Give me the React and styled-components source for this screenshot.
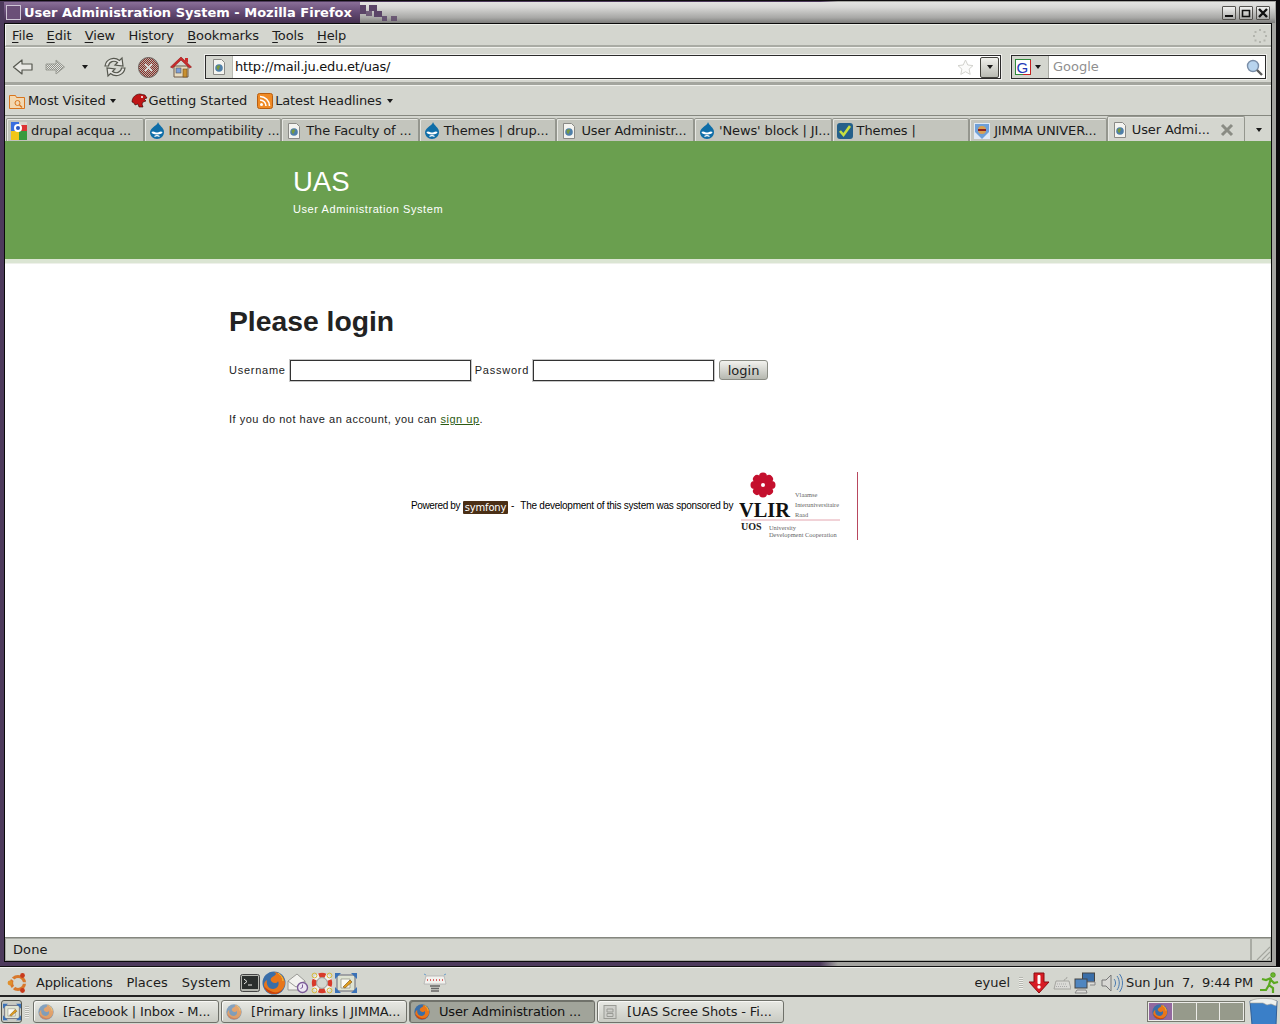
import React from "react";
import styled, { createGlobalStyle } from "styled-components";

const Global = createGlobalStyle`
  html, body { margin: 0; padding: 0; background: #000; }
  body { width: 1280px; height: 1024px; overflow: hidden; font-family: "DejaVu Sans", sans-serif; }
  * { box-sizing: border-box; }
  svg { flex: none; display: block; }
`;

const Desktop = styled.div`
  width: 1280px; height: 1024px; display: flex; flex-direction: column; background: #d4d6cf; color: #1c1c1c;
  font: 13px/16px "DejaVu Sans", sans-serif;
`;
const Win = styled.div`
  height: 967px; display: flex; flex-direction: column; padding: 1px 4px 4px 4px;
  background: linear-gradient(90deg, #4d3a5c 820px, #a4a4a0 838px);
  border-top: 1px solid #0d0b0d; border-right: 4px solid #0c0a0c; margin: 0; flex: none;
  border-bottom: 1px solid #111;
`;
const Title = styled.div`
  height: 21px; margin-right: -3px; flex: none; display: flex; align-items: center; padding: 0 5px 0 2px;
  background: linear-gradient(#e4e4e2, #d8d8d6 25%, #a8a8a6 75%, #7c7c7a);
`;
const TitlePurple = styled.div`
  height: 21px; width: 356px; flex: none; display: flex; align-items: center; gap: 3px; margin-left: -2px; padding-left: 2px;
  background: linear-gradient(#8a6f98, #644a74 50%, #45304f);
  color: #fff; font-weight: 700; font-size: 13px; white-space: nowrap;
`;
const Spacer = styled.div`flex: 1;`;
const WinBtn = styled.div`
  width: 14px; height: 14px; margin-left: 3px; border: 1px solid #55534f; background: linear-gradient(#f2f2f0, #aaaaa8);
  display: flex; align-items: center; justify-content: center; border-radius: 1px;
`;
const Client = styled.div`
  flex: 1; min-height: 0; display: flex; flex-direction: column; border: 1px solid #0a0a0a; background: #d4d6cf;
`;
const MenuBar = styled.div`
  height: 23px; flex: none; display: flex; align-items: center; padding: 2px 3px 0 6px; gap: 13.25px;
  background: #d4d6cf; border-bottom: 2px solid #a9aba4; border-left: 1px solid #f4f4f2;
  box-shadow: inset 0 1px #eef0ea;
`;
const MenuItem = styled.span`
  letter-spacing: -.1px; u { text-decoration: underline; text-underline-offset: 2px; text-decoration-thickness: 1px; }
`;
const NavBar = styled.div`
  height: 38px; flex: none; display: flex; align-items: center; padding: 5px 5px 0 1px;
  background: #d4d6cf; border-bottom: 3px solid #a3a59e; box-shadow: inset 0 1px #f0f1ec;
`;
const NavBtn = styled.span`
  display: flex; align-items: center; justify-content: center; flex: none; width: ${p => p.$w || 33}px; height: 24px;
`;
const UrlBox = styled.div`
  width: 796px; height: 24px; margin-left: 8px; flex: none; display: flex; align-items: center; background: #fff;
  border: 1px solid #2b2b2b; outline: 1px solid #efefec;
`;
const Favicon = styled.span`
  width: 27px; height: 22px; background: #d4d6cf; flex: none; display: flex; align-items: center; justify-content: center; border-right: 1px solid #b9bbb4;
`;
const UrlText = styled.span`flex: 1; padding-left: 2px; font-size: 13px; letter-spacing: -.23px; color: #111;`;
const StarSlot = styled.span`margin-right: 6px; flex: none;`;
const DropBtn = styled.span`
  width: 19px; height: 21px; margin-right: 1px; border: 1px solid #44443f; border-radius: 2px; background: linear-gradient(#f0f0ec, #b9bbb3);
  display: flex; align-items: center; justify-content: center; flex: none;
`;
const Search = styled.div`
  width: 255px; height: 24px; margin-left: 10px; flex: none; display: flex; align-items: center; background: #fff; border: 1px solid #2b2b2b; outline: 1px solid #efefec;
`;
const Engine = styled.span`
  width: 37px; height: 22px; flex: none; display: flex; align-items: center; gap: 4px; padding-left: 3px; background: #d4d6cf; border-right: 1px solid #a9aba4;
`;
const SearchText = styled.span`flex: 1; padding-left: 4px; color: #8f8f8f;`;
const MagnifierSlot = styled.span`margin-right: 2px; flex: none;`;
const BookBar = styled.div`
  height: 31px; flex: none; display: flex; align-items: center; padding: 2px 0 0 4px; background: #d4d6cf; border-bottom: 1px solid #85877f; box-shadow: inset 0 1px #f0f1ec;
`;
const Book = styled.span`display: flex; align-items: center; gap: ${p => p.$gap ?? 2}px; margin-right: ${p => p.$mr || 0}px; white-space: nowrap; letter-spacing: -.13px;`;
const Caret = styled.span`
  width: 0; height: 0; border-left: 3px solid transparent; border-right: 3px solid transparent; border-top: 4px solid #1a1a1a; display: inline-block; flex: none; margin-left: ${p => p.$ml || 0}px;
`;
const TabBar = styled.div`
  height: 25px; flex: none; display: flex; align-items: flex-end; padding-left: 1px; background: #d4d6cf;
`;
const Tab = styled.div`
  width: ${p => p.$active ? 138 : 137.6}px; height: ${p => p.$active ? 25 : 23}px; flex: none; display: flex; align-items: center; gap: 4px;
  padding: ${p => p.$active ? "1px 10px 0 4px" : "1px 1px 0 4px"}; white-space: nowrap; overflow: hidden; letter-spacing: -.12px;
  background: ${p => p.$active ? "#d4d6cf" : "#c3c5bd"}; border: 1px solid #94968e; border-bottom: 0; border-radius: 2px 2px 0 0;
  box-shadow: inset 1px 1px #e6e7e2;
`;
const TabLabel = styled.span`flex: 1;`;
const TabMore = styled.div`flex: 1; height: 23px; display: flex; align-items: center; justify-content: center; padding-left: 2px;`;
const Viewport = styled.div`flex: 1; min-height: 0; display: flex; flex-direction: column; background: #fff; color: #000; font-family: "Liberation Sans", sans-serif;`;
const Hero = styled.div`
  height: 118px; flex: none; background: #6a9f4f; padding: 23px 0 0 288px; color: #fff;
`;
const HeroTitle = styled.div`font-size: 27.5px; line-height: 36px;`;
const HeroSub = styled.div`font-size: 11px; line-height: 14px; margin-top: 2px; letter-spacing: .58px;`;
const Band = styled.div`height: 5px; flex: none; background: #dbe5d3; border-bottom: 1px solid #eef1ea;`;
const Main = styled.div`flex: 1; padding: 40px 0 0 224px;`;
const Heading = styled.h1`margin: 0; font: 700 28.3px/34px "Liberation Sans", sans-serif; color: #222;`;
const Form = styled.form`display: flex; align-items: center; margin-top: 20px; height: 24px; font-size: 11px; color: #222;`;
const Label = styled.label`letter-spacing: .75px; margin-right: ${p => p.$mr}px;`;
const Field = styled.input`
  width: 181px; height: 21px; padding: 0; border: 1px solid #333; outline: 1px solid #c8c8c8; background: #fff; margin-right: ${p => p.$mr}px; flex: none;
`;
const Login = styled.button`
  width: 49px; height: 20px; padding: 0; border: 1px solid #8a8c84; border-radius: 3px; background: linear-gradient(#f2f2ee, #b6b8b0);
  font: 13px "DejaVu Sans", sans-serif; color: #222;
`;
const Para = styled.p`margin: 30px 0 0; font-size: 11px; line-height: 14px; color: #222; letter-spacing: .5px;`;
const Link = styled.a`color: #2c5a12; text-decoration: underline;`;
const Credit = styled.div`
  display: flex; align-items: center; margin: 46px 0 0 182px; height: 68px; font-size: 10px; color: #000; white-space: nowrap;
`;
const Powered = styled.span`letter-spacing: -.38px;`;
const Badge = styled.span`
  width: 45px; height: 13px; margin: 3px 3px 0 3px; background: #4a2f16; border-radius: 1px; color: #fff; font: 10px/13px "DejaVu Sans", sans-serif; text-align: center; letter-spacing: -.2px;
`;
const Sponsor = styled.span`margin-left: 6px; letter-spacing: -.25px;`;
const VlirBox = styled.div`width: 119px; height: 68px; margin-left: 6px; flex: none; border-right: 1px solid #b8485e;`;
const Status = styled.div`
  height: 24px; flex: none; display: flex; background: #d4d6cf; border-top: 1px solid #85877f;
`;
const StatusText = styled.div`flex: 1; padding: 3px 0 0 7px; border: 1px solid #a9aba4; letter-spacing: .1px;`;
const Grip = styled.div`width: 20px; border: 1px solid #a9aba4; display: flex; align-items: flex-end; justify-content: flex-end;`;
const PanelTop = styled.div`
  height: 30px; flex: none; display: flex; align-items: center; padding: 3px 0 0 6px; background: #d4d6cf; border-bottom: 2px solid #222; box-shadow: inset 0 1px #f2f3ee;
`;
const PanelMenu = styled.span`margin: 0 ${p => p.$mr}px 0 ${p => p.$ml || 0}px; letter-spacing: ${p => p.$ls ?? 0}px; white-space: nowrap;`;
const IconSlot = styled.span`display: flex; align-items: center; justify-content: center; flex: none; width: ${p => p.$w}px; margin: ${p => p.$m || 0};`;
const UserName = styled.span``;
const Handle = styled.span`
  width: 4px; height: 12px; margin: 0 ${p => p.$mr}px 0 ${p => p.$ml}px; flex: none;
  background: repeating-linear-gradient(#b5b7b0 0 1px, #eeeeea 1px 2px);
`;
const Clock = styled.span`margin: 0 5px 0 3px; white-space: pre; letter-spacing: -.18px;`;
const PanelBottom = styled.div`
  flex: 1; display: flex; align-items: center; padding: 1px 0 0 1px; background: #d4d6cf;
`;
const ShowDesk = styled.span`
  width: 21px; height: 23px; flex: none; border: 1px solid #55574f; border-radius: 3px; display: flex; align-items: center; justify-content: center; background: #c8cac3;
`;
const Task = styled.div`
  width: ${p => p.$w || 186}px; height: 23px; flex: none; margin-right: 2px; display: flex; align-items: center; gap: 9px; padding: 0 4px 0 4px;
  border: 1px solid #6f716a; border-radius: 3px; white-space: nowrap; overflow: hidden; letter-spacing: -.15px;
  background: ${p => p.$active ? "#a1a49a" : "linear-gradient(#e8e9e4, #c9cbc3)"};
  color: ${p => p.$active ? "#111" : "#1c1c1c"};
  box-shadow: ${p => p.$active ? "inset 1px 1px #70726a" : "inset 1px 1px #f8f8f5"};
`;
const Pager = styled.div`
  width: 98px; height: 21px; flex: none; display: grid; grid-template-columns: repeat(4, 1fr); gap: 1px; padding: 1px; margin-right: 3px; background: #ecece8; border: 1px solid #77796f;
`;
const PagerCell = styled.span`
  background: ${p => p.$on ? "#93699f" : "#969a8b"}; display: flex; align-items: center; justify-content: center;
`;

const Tri = () => <Caret />;

const Stairs = () => (
  <svg width="40" height="21" viewBox="0 0 40 21" fill="#5b4568">
    <rect x="0" y="3" width="6" height="9" fill="#5b4568" />
    <rect x="9" y="3" width="8" height="6" />
    <rect x="6" y="9" width="6" height="5" opacity=".8" />
    <rect x="14" y="9" width="8" height="6" />
    <rect x="22" y="14" width="5" height="5" opacity=".85" />
    <rect x="31" y="14" width="6" height="5" opacity=".8" />
  </svg>
);
const PageIcon = ({ s = 16 }) => (
  <svg width={s} height={s} viewBox="0 0 16 16">
    <path d="M2.500 .5h8l3 3v12h-11z" fill="#f4f4f0" stroke="#8a8a86" />
    <circle cx="8" cy="9" r="3.800" fill="#4f7fa8" />
    <path d="M5.500 8c1-2 3-2 3.500-1s-1 1.500-1 3-2 1-2.500-2z" fill="#7a9a3e" />
  </svg>
);
const Drupal = () => (
  <svg width="16" height="17" viewBox="0 0 16 17">
    <path d="M9 0c0 3-7 5-8 10 0 4 3 7 7 7s7-3 7-7C15 5 10 4 9 0z" fill="#0f6ea8" />
    <path d="M2.500 10c2-1.500 3.500.5 5.500.5s3.500-2 5.500-.5c0 1.500-2 2.500-5.500 2.500s-5.500-1-5.500-2.500z" fill="#fff" />
    <path d="M5.500 14.500c1.500-1 3.500-1 5 0" fill="none" stroke="#fff" strokeWidth="1.200" />
  </svg>
);
const GoogleFav = () => (
  <svg width="16" height="18" viewBox="0 0 16 18">
    <rect x="0" y="0" width="8" height="9" fill="#3a6fe0" />
    <rect x="8" y="0" width="8" height="9" fill="#d8d8d0" />
    <path d="M8 3h8v7H8z" fill="#d33" />
    <rect x="0" y="9" width="8" height="9" fill="#f2c618" />
    <rect x="8" y="9" width="8" height="9" fill="#3a9a3e" />
    <circle cx="7" cy="6" r="4" fill="#fff" />
    <circle cx="7" cy="6" r="2" fill="#2a56c0" />
  </svg>
);
const CheckFav = () => (
  <svg width="16" height="16" viewBox="0 0 16 16">
    <rect width="16" height="16" rx="3" fill="#25608a" />
    <path d="M3 8l3.500 4L13 3" fill="none" stroke="#c8e040" strokeWidth="2.600" />
  </svg>
);
const JimmaFav = () => (
  <svg width="16" height="16" viewBox="0 0 16 16">
    <rect width="16" height="16" fill="#dfe9f5" />
    <path d="M1 1h14v8l-7 7-7-7z" fill="#6ea0d8" />
    <circle cx="8" cy="7" r="4" fill="#d9a050" />
    <path d="M4 7h8" stroke="#8a2020" strokeWidth="2" />
  </svg>
);
const Firefox = ({ s = 16, dim }) => (
  <svg width={s} height={s} viewBox="0 0 24 24" opacity={dim ? 0.55 : 1}>
    <circle cx="12" cy="12" r="11.500" fill="#3a6ea8" />
    <path d="M12 1c3 1 2 3 0 4-4 2-4 4-2 6s6 1 6-1c2 4-1 8-5 8-5 0-7-5-6-9-2 1-3 3-3 5 0 5 5 9 10 9s11-5 11-11C23 7 18 1 12 1z" fill="#e8761a" />
    <path d="M2 15c1 5 6 8 10 8s7-2 9-5c-3 3-7 4-10 3s-7-3-9-6z" fill="#c8420c" />
    <path d="M16 2c3 2 5 5 5 8 0-3-2-6-5-8z" fill="#f0b030" stroke="#f0b030" />
  </svg>
);
const Back = () => (
  <svg width="21" height="18" viewBox="0 0 21 18">
    <path d="M20 6v6H10v4L1.500 9 10 2v4z" fill="#e8e8e4" stroke="#55574f" strokeWidth="1.200" strokeLinejoin="round" />
  </svg>
);
const Forward = () => (
  <svg width="21" height="18" viewBox="0 0 21 18">
    <defs>
      <pattern id="hatch" width="2" height="2" patternUnits="userSpaceOnUse"><rect width="2" height="2" fill="#e4e4e0" /><rect width="1" height="1" fill="#8f9189" /><rect x="1" y="1" width="1" height="1" fill="#8f9189" /></pattern>
    </defs>
    <path d="M1 6v6h10v4l8.500-7L11 2v4z" fill="url(#hatch)" stroke="#9a9c94" strokeWidth="1" />
  </svg>
);
const Reload = () => (
  <svg width="22" height="22" viewBox="0 0 22 22" fill="#e4e4e0" stroke="#56584f" strokeWidth="1.200">
    <path d="M1 10C2 3 10 0 15.500 4.500L18 2l1 8-8-1 2.500-2.500C10 4 5 5.500 4.500 10z" />
    <path d="M21 12c-1 7-9 10-14.500 5.500L4 20l-1-8 8 1-2.500 2.500C12 18 17 16.500 17.500 12z" />
  </svg>
);
const Stop = () => (
  <svg width="21" height="21" viewBox="0 0 21 21">
    <defs>
      <pattern id="stopdots" width="2" height="2" patternUnits="userSpaceOnUse"><rect width="2" height="2" fill="#b4b4ac" /><rect width="1" height="1" fill="#8c2a24" /><rect x="1" y="1" width="1" height="1" fill="#8c2a24" /></pattern>
    </defs>
    <circle cx="10.500" cy="10.500" r="10" fill="#a5736c" />
    <circle cx="10.500" cy="10.500" r="10" fill="url(#stopdots)" stroke="#6a625e" strokeWidth="1" />
    <path d="M7 7l7 7M14 7l-7 7" stroke="#d8d8d4" strokeWidth="2" />
  </svg>
);
const Home = () => (
  <svg width="22" height="22" viewBox="0 0 22 22">
    <path d="M4 10v11h14V10z" fill="#e8dcc0" stroke="#6e5a48" />
    <path d="M0.500 11L11 1l10.500 10-2 1L11 4 2.500 12z" fill="#cc2a2a" stroke="#8a1414" strokeWidth=".6" />
    <path d="M15 2h3v5l-3-2z" fill="#cc2a2a" />
    <rect x="6" y="12" width="5" height="5" fill="#7da0d8" stroke="#555" strokeWidth=".6" />
    <rect x="13" y="13" width="4" height="8" fill="#c89030" stroke="#6e4a18" strokeWidth=".6" />
  </svg>
);
const Star = () => (
  <svg width="17" height="16" viewBox="0 0 17 16">
    <path d="M8.500 1l2.300 5 5.200.6-3.900 3.500 1.100 5.300-4.700-2.700-4.700 2.700 1.100-5.300L1 6.600 6.200 6z" fill="#fbfbfa" stroke="#d2d2cd" />
  </svg>
);
const GLogo = () => (
  <svg width="16" height="16" viewBox="0 0 16 16">
    <rect x=".5" y=".5" width="15" height="15" fill="#fff" stroke="#2f8a3a" />
    <path d="M15.500 1v14.500H8" fill="none" stroke="#c82020" />
    <text x="1.500" y="13.500" fontFamily="Liberation Sans, sans-serif" fontSize="15" fill="#2438b8">G</text>
  </svg>
);
const Magnifier = () => (
  <svg width="17" height="17" viewBox="0 0 17 17">
    <circle cx="7" cy="7" r="5.500" fill="#b8d4ee" stroke="#7a8ea8" strokeWidth="1.400" />
    <path d="M11 11l5 5" stroke="#5a5a5a" strokeWidth="2.400" />
  </svg>
);
const FolderRss = () => (
  <svg width="16" height="16" viewBox="0 0 16 16">
    <path d="M.5 2.500h6l1 2h8v11H.5z" fill="#f3d8b0" stroke="#d9751c" />
    <circle cx="8.500" cy="10" r="2.500" fill="none" stroke="#d9751c" />
    <path d="M10.500 12l2.500 2.500" stroke="#d9751c" strokeWidth="1.400" />
  </svg>
);
const Dino = () => (
  <svg width="17" height="16" viewBox="0 0 17 16">
    <path d="M1 9c0-5 4-8 8-8 2 0 3 1 5 1l2 3-3 1 2 2-3 1-1 2 1 3H8l-1-3-3 1-1-2z" fill="#c01515" stroke="#300" strokeWidth=".6" />
    <circle cx="11" cy="4" r="1" fill="#fff" />
  </svg>
);
const Rss = () => (
  <svg width="16" height="16" viewBox="0 0 16 16">
    <rect x=".5" y=".5" width="15" height="15" rx="2" fill="#f08a24" stroke="#b85e10" />
    <circle cx="4.500" cy="11.500" r="1.500" fill="#fff" />
    <path d="M3 7a6 6 0 0 1 6 6M3 3.500A9.500 9.500 0 0 1 12.500 13" fill="none" stroke="#fff" strokeWidth="1.600" />
  </svg>
);
const Close = ({ kind }) => (
  <svg width="10" height="10" viewBox="0 0 10 10">
    {kind === "min" && <rect x="1" y="7" width="8" height="2" fill="#111" />}
    {kind === "max" && <path d="M1.500 2.500h7v6h-7z" fill="none" stroke="#111" strokeWidth="1.600" />}
    {kind === "x" && <path d="M1 1l8 8M9 1L1 9" stroke="#111" strokeWidth="2.400" />}
  </svg>
);
const Spinner = () => (
  <svg width="16" height="16" viewBox="0 0 16 16" fill="#b3b5ae">
    {[[7, 1], [11.500, 3], [13, 7], [11.500, 11.500], [7, 13], [2.500, 11.500], [1, 7], [2.500, 3]].map(([x, y], i) => <rect key={i} x={x} y={y} width="2" height="2" />)}
  </svg>
);
const TabClose = () => (
  <svg width="14" height="14" viewBox="0 0 14 14">
    <path d="M2 2l10 10M12 2L2 12" stroke="#8a8c84" strokeWidth="3" />
  </svg>
);
const ResizeGrip = () => (
  <svg width="15" height="15" viewBox="0 0 15 15" stroke="#a3a59e" strokeWidth="1.200">
    <path d="M2 15L15 2M7 15l8-8M12 15l3-3" />
  </svg>
);
const Ubuntu = () => (
  <svg width="22" height="22" viewBox="0 0 22 22">
    <circle cx="11" cy="11" r="6.500" fill="none" stroke="#d8782c" strokeWidth="3.200" />
    <circle cx="3" cy="11" r="2.400" fill="#e0902c" />
    <circle cx="15.500" cy="3.500" r="2.400" fill="#c83a1c" />
    <circle cx="15.500" cy="18.500" r="2.400" fill="#c83a1c" />
    <path d="M11 11L4 6M11 11l8 0M11 11l-6 6" stroke="#d4d6cf" strokeWidth="1.600" />
  </svg>
);
const Terminal = () => (
  <svg width="20" height="20" viewBox="0 0 20 20">
    <rect x=".5" y="1.500" width="19" height="17" rx="2" fill="#b5b7b0" stroke="#444" />
    <rect x="2" y="3" width="16" height="13" fill="#2a2e2c" />
    <path d="M4 6l3 2.500L4 11M8 12h4" stroke="#e8e8e4" fill="none" />
  </svg>
);
const Mail = () => (
  <svg width="22" height="22" viewBox="0 0 22 22">
    <path d="M1 9L10 2l8 7v9H1z" fill="#f2f2ee" stroke="#9a9a96" />
    <path d="M1 9l8 6 9-6" fill="none" stroke="#9a9a96" />
    <circle cx="15.500" cy="15.500" r="5" fill="#ece6f2" stroke="#7a5a98" strokeWidth="1.400" />
    <path d="M15.500 12.500v3l-2 1" stroke="#7a5a98" fill="none" />
  </svg>
);
const Help = () => (
  <svg width="22" height="22" viewBox="0 0 22 22">
    <circle cx="11" cy="11" r="8" fill="none" stroke="#f0f0ec" strokeWidth="4.400" />
    <circle cx="11" cy="11" r="8" fill="none" stroke="#d83a2a" strokeWidth="4.400" strokeDasharray="6.560 6" strokeDashoffset="3.300" />
    <circle cx="11" cy="11" r="5.400" fill="#d4d6cf" stroke="#777" strokeWidth=".6" />
    <g fill="none" stroke="#d8b838" strokeWidth="1"><circle cx="3.500" cy="3.500" r="2.400" /><circle cx="18.500" cy="3.500" r="2.400" /><circle cx="3.500" cy="18.500" r="2.400" /><circle cx="18.500" cy="18.500" r="2.400" /></g>
  </svg>
);
const Note = ({ s = 22 }) => (
  <svg width={s} height={s} viewBox="0 0 22 22">
    <rect x="2" y="3" width="18" height="16" rx="1" fill="#dfe3d2" stroke="#667" />
    <path d="M6 7h9v9H6z" fill="#fbfbf4" stroke="#8a8a80" strokeWidth=".7" />
    <path d="M8 15l7-7 2 2-7 6z" fill="#e0a020" stroke="#7a4a10" strokeWidth=".6" />
    <g fill="#3a72b8"><path d="M0 1h6L0 7zM22 1v6l-6-6zM0 21v-6l6 6zM22 21h-6l6-6z" /></g>
  </svg>
);
const Applet = () => (
  <svg width="24" height="24" viewBox="0 0 24 24">
    <path d="M3 5h18l2 8H1z" fill="#f2f2ee" stroke="#aaa" strokeWidth=".7" />
    <path d="M4 9h16" stroke="#d66" strokeDasharray="1 2" strokeWidth="2" />
    <path d="M7 15h10M8 17.500h8M8 20h8" stroke="#666" strokeWidth="1.600" />
    <path d="M1 3l2 1M23 3l-2 1" stroke="#6a9cc8" />
  </svg>
);
const AlertArrow = () => (
  <svg width="22" height="22" viewBox="0 0 22 22">
    <path d="M6 1h10v9h5L11 21 1 10h5z" fill="#d81c24" stroke="#8a0e12" />
    <rect x="9.500" y="3" width="3" height="9" rx="1" fill="#fff" />
    <circle cx="11" cy="15" r="1.700" fill="#fff" />
  </svg>
);
const Keyboard = () => (
  <svg width="18" height="16" viewBox="0 0 18 16">
    <path d="M3 6h13l2 8H1z" fill="#dadad6" stroke="#a5a5a0" />
    <path d="M4 9h10M3 11.500h12" stroke="#aaa" strokeDasharray="1 1" />
    <path d="M11 6c0-3 3-1 3-4" fill="none" stroke="#a5a5a0" />
  </svg>
);
const Network = () => (
  <svg width="22" height="22" viewBox="0 0 22 22">
    <rect x="8.500" y="1" width="12" height="9" fill="#3a6ea8" stroke="#444" />
    <path d="M9 10h12v3h-5" fill="#dcdcd8" stroke="#888" />
    <rect x="1" y="7" width="12" height="9" fill="#4f86c0" stroke="#444" />
    <path d="M3 18h9l1 3H1z" fill="#dcdcd8" stroke="#888" />
  </svg>
);
const Volume = () => (
  <svg width="22" height="22" viewBox="0 0 22 22">
    <path d="M1 8h4l5-5v16l-5-5H1z" fill="#d8d8d4" stroke="#777" />
    <path d="M13 7c2 2 2 6 0 8M16 4c3 4 3 10 0 14M18.500 2c4 5 4 13 0 18" fill="none" stroke="#4a7ab0" />
  </svg>
);
const Runner = () => (
  <svg width="20" height="22" viewBox="0 0 20 22">
    <circle cx="14" cy="3" r="2.400" fill="#6ab82c" stroke="#3a7a10" strokeWidth=".5" />
    <path d="M12 6L7 8 3 7M12 6l-2 7 4 3v5M10 13l-3 5H1M12 8l3 3 4-1" fill="none" stroke="#5aa820" strokeWidth="2.200" />
  </svg>
);
const FileBox = () => (
  <svg width="16" height="16" viewBox="0 0 16 16">
    <rect x="2" y="1.500" width="12" height="13" fill="#cfd0cb" stroke="#9a9b95" />
    <path d="M5 5h6v3H5zM5 9.500h6v3H5z" fill="none" stroke="#9a9b95" />
  </svg>
);
const Trash = () => (
  <svg width="30" height="27" viewBox="0 0 30 27">
    <path d="M1 3h27l-1 24H3z" fill="#3a7fc8" stroke="#2f5f98" />
    <path d="M1 3c6-3 14-3 22-2l5 2-1 5-5-2-4 1-4-2H1z" fill="#eef1ee" stroke="#9a9a96" strokeWidth=".6" />
  </svg>
);
const VlirMark = () => (
  <svg width="118" height="68" viewBox="0 0 118 68">
    <g fill="#c4102e">
      <circle cx="24" cy="13" r="8" />
      {[0, 45, 90, 135, 180, 225, 270, 315].map(a => <circle key={a} cx="24" cy="4.500" r="4" transform={`rotate(${a} 24 13)`} />)}
    </g>
    <circle cx="24" cy="13" r="2" fill="#fff" />
    <text x="0" y="45" fontFamily="Liberation Serif, serif" fontWeight="700" fontSize="20.400" fill="#111">VLIR</text>
    <g fontFamily="Liberation Serif, serif" fontSize="6.400" fill="#666">
      <text x="56" y="25">Vlaamse</text>
      <text x="56" y="35">Interuniversitaire</text>
      <text x="56" y="45">Raad</text>
      <text x="30" y="58">University</text>
      <text x="30" y="65">Development Cooperation</text>
    </g>
    <path d="M2 48h99" stroke="#e4a6b0" />
    <text x="2" y="58" fontFamily="Liberation Serif, serif" fontWeight="700" fontSize="10" fill="#222">UOS</text>
  </svg>
);

const tabs = [
  [<GoogleFav />, "drupal acqua ..."],
  [<Drupal />, "Incompatibility ..."],
  [<PageIcon />, "The Faculty of ..."],
  [<Drupal />, "Themes | drup..."],
  [<PageIcon />, "User Administr..."],
  [<Drupal />, "'News' block | JI..."],
  [<CheckFav />, "Themes |"],
  [<JimmaFav />, "JIMMA UNIVER..."],
];

export default function App() {
  return (
    <Desktop>
      <Global />
      <Win>
        <Title>
          <TitlePurple>
            <svg width="15" height="15" viewBox="0 0 15 15"><rect x=".5" y=".5" width="14" height="14" fill="#6b4f78" stroke="#cfc6d6" /></svg>
            User Administration System - Mozilla Firefox
          </TitlePurple>
          <Stairs />
          <Spacer />
          <WinBtn><Close kind="min" /></WinBtn>
          <WinBtn><Close kind="max" /></WinBtn>
          <WinBtn><Close kind="x" /></WinBtn>
        </Title>
        <Client>
          <MenuBar>
            <MenuItem><u>F</u>ile</MenuItem>
            <MenuItem><u>E</u>dit</MenuItem>
            <MenuItem><u>V</u>iew</MenuItem>
            <MenuItem>Hi<u>s</u>tory</MenuItem>
            <MenuItem><u>B</u>ookmarks</MenuItem>
            <MenuItem><u>T</u>ools</MenuItem>
            <MenuItem><u>H</u>elp</MenuItem>
            <Spacer />
            <Spinner />
          </MenuBar>
          <NavBar>
            <NavBtn $w={33}><Back /></NavBtn>
            <NavBtn $w={33}><Forward /></NavBtn>
            <NavBtn $w={26}><Tri /></NavBtn>
            <NavBtn $w={34}><Reload /></NavBtn>
            <NavBtn $w={33}><Stop /></NavBtn>
            <NavBtn $w={32}><Home /></NavBtn>
            <UrlBox>
              <Favicon><PageIcon /></Favicon>
              <UrlText>http://mail.ju.edu.et/uas/</UrlText>
              <StarSlot><Star /></StarSlot>
              <DropBtn><Tri /></DropBtn>
            </UrlBox>
            <Search>
              <Engine><GLogo /><Tri /></Engine>
              <SearchText>Google</SearchText>
              <MagnifierSlot><Magnifier /></MagnifierSlot>
            </Search>
          </NavBar>
          <BookBar>
            <Book $mr={15} $gap={3}><FolderRss />Most Visited<Caret $ml={1} /></Book>
            <Book $mr={10} $gap={1}><Dino />Getting Started</Book>
            <Book><Rss />Latest Headlines<Caret $ml={3} /></Book>
          </BookBar>
          <TabBar>
            {tabs.map(([icon, label], i) => (
              <Tab key={i}>{icon}<TabLabel>{label}</TabLabel></Tab>
            ))}
            <Tab $active><PageIcon /><TabLabel>User Admi...</TabLabel><TabClose /></Tab>
            <TabMore><Tri /></TabMore>
          </TabBar>
          <Viewport>
            <Hero>
              <HeroTitle>UAS</HeroTitle>
              <HeroSub>User Administration System</HeroSub>
            </Hero>
            <Band />
            <Main>
              <Heading>Please login</Heading>
              <Form onSubmit={e => e.preventDefault()}>
                <Label $mr={4}>Username</Label>
                <Field $mr={4} />
                <Label $mr={4}>Password</Label>
                <Field $mr={5} type="password" />
                <Login type="button">login</Login>
              </Form>
              <Para>If you do not have an account, you can <Link href="#">sign up</Link>.</Para>
              <Credit>
                <Powered>Powered by</Powered>
                <Badge>symfony</Badge>
                <span>-</span>
                <Sponsor>The development of this system was sponsored by</Sponsor>
                <VlirBox><VlirMark /></VlirBox>
              </Credit>
            </Main>
          </Viewport>
          <Status>
            <StatusText>Done</StatusText>
            <Grip><ResizeGrip /></Grip>
          </Status>
        </Client>
      </Win>
      <PanelTop>
        <IconSlot $w={24}><Ubuntu /></IconSlot>
        <PanelMenu $mr={14} $ml={6} $ls={-0.25}>Applications</PanelMenu>
        <PanelMenu $mr={14}>Places</PanelMenu>
        <PanelMenu $mr={9} $ls={0.1}>System</PanelMenu>
        <IconSlot $w={20} $m="0 2px 0 0"><Terminal /></IconSlot>
        <IconSlot $w={24}><Firefox s={24} /></IconSlot>
        <IconSlot $w={24}><Mail /></IconSlot>
        <IconSlot $w={24}><Help /></IconSlot>
        <IconSlot $w={24}><Note /></IconSlot>
        <IconSlot $w={24} $m="0 0 0 65px"><Applet /></IconSlot>
        <Spacer />
        <UserName>eyuel</UserName>
        <Handle $ml={9} $mr={5} />
        <IconSlot $w={22} $m="0 2px 0 0"><AlertArrow /></IconSlot>
        <IconSlot $w={20}><Keyboard /></IconSlot>
        <IconSlot $w={25} $m="0 3px 0 0"><Network /></IconSlot>
        <IconSlot $w={23}><Volume /></IconSlot>
        <Clock>Sun Jun  7,  9:44 PM</Clock>
        <IconSlot $w={22}><Runner /></IconSlot>
      </PanelTop>
      <PanelBottom>
        <ShowDesk><Note s={18} /></ShowDesk>
        <Handle $ml={3} $mr={4} />
        <Task><Firefox dim /><span>[Facebook | Inbox - M...</span></Task>
        <Task><Firefox dim /><span>[Primary links | JIMMA...</span></Task>
        <Task $active><Firefox /><span>User Administration ...</span></Task>
        <Task $w={187}><FileBox /><span>[UAS Scree Shots - Fi...</span></Task>
        <Spacer />
        <Pager>
          <PagerCell $on><Firefox /></PagerCell>
          <PagerCell /><PagerCell /><PagerCell />
        </Pager>
        <IconSlot $w={32}><Trash /></IconSlot>
      </PanelBottom>
    </Desktop>
  );
}
